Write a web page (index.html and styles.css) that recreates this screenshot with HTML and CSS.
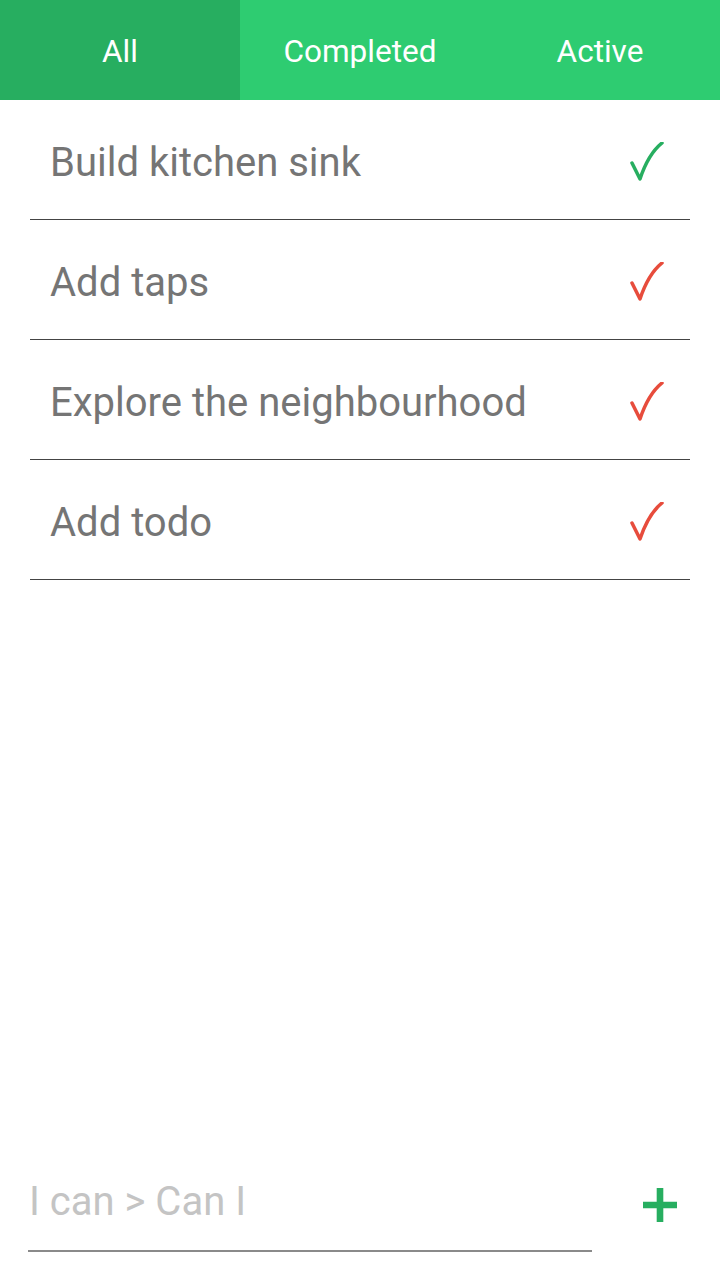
FILE: index.html
```html
<!DOCTYPE html>
<html>
<head>
<meta charset="utf-8">
<link rel="stylesheet" href="styles.css">
</head>
<body>
<div class="app">
  <nav class="tabs">
    <div class="tab active">All</div>
    <div class="tab">Completed</div>
    <div class="tab">Active</div>
  </nav>
  <ul class="list">
    <li class="item"><span class="label">Build kitchen sink</span><svg class="check done" viewBox="0 0 34 40"><path d="M2 21 L10 37 C15 22 22 9 32 1"/></svg></li>
    <li class="item"><span class="label">Add taps</span><svg class="check todo" viewBox="0 0 34 40"><path d="M2 21 L10 37 C15 22 22 9 32 1"/></svg></li>
    <li class="item"><span class="label">Explore the neighbourhood</span><svg class="check todo" viewBox="0 0 34 40"><path d="M2 21 L10 37 C15 22 22 9 32 1"/></svg></li>
    <li class="item"><span class="label">Add todo</span><svg class="check todo" viewBox="0 0 34 40"><path d="M2 21 L10 37 C15 22 22 9 32 1"/></svg></li>
  </ul>
  <div class="spacer"></div>
  <form class="composer">
    <div class="field"><input class="input" type="text" placeholder="I can &gt; Can I"></div>
    <button class="add" type="button" aria-label="Add"><svg viewBox="0 0 36 36"><path d="M18 0 V36 M0 18 H36"/></svg></button>
  </form>
</div>
</body>
</html>
```
FILE: styles.css
```css
* { box-sizing: border-box; }
html, body { margin: 0; padding: 0; background: #fff; }
body { font-family: Roboto, "Noto Sans", sans-serif; }
.app { width: 720px; height: 1280px; display: flex; flex-direction: column; }
.tabs { display: flex; height: 100px; background: #2ecc71; }
.tab { flex: 1; display: flex; align-items: center; justify-content: center; color: #fff; font-size: 31.5px; padding-top: 2px; }
.tab.active { background: #27ae60; }
.list { list-style: none; margin: 0; padding: 0 30px; }
.item { height: 120px; display: flex; align-items: center; justify-content: space-between; border-bottom: 1px solid #444; padding: 0 26px 0 20px; }
.label { font-size: 40px; color: #757575; padding-top: 5px; }
.check { width: 34px; height: 40px; fill: none; stroke-width: 3.5; stroke-linecap: round; stroke-linejoin: round; margin-top: 4px; }
.check.done { stroke: #27ae60; }
.check.todo { stroke: #e74c3c; }
.spacer { flex: 1; }
.composer { display: flex; align-items: center; padding: 0 0 28px 28px; }
.field { width: 564px; border-bottom: 2px solid #8a8a8a; height: 74px; display: flex; align-items: flex-start; }
.input { border: none; outline: none; background: transparent; width: 100%; font-family: Roboto, sans-serif; font-size: 40px; line-height: 48px; height: 48px; color: #555; padding: 0 0 0 1px; margin: 0; }
.input::placeholder { color: #c4c4c4; }
.add { border: none; background: transparent; padding: 0; margin-left: 51px; width: 34px; height: 36px; display: flex; margin-bottom: 20px; }
.add svg { width: 34px; height: 36px; stroke: #27ae60; stroke-width: 7; fill: none; }
```
